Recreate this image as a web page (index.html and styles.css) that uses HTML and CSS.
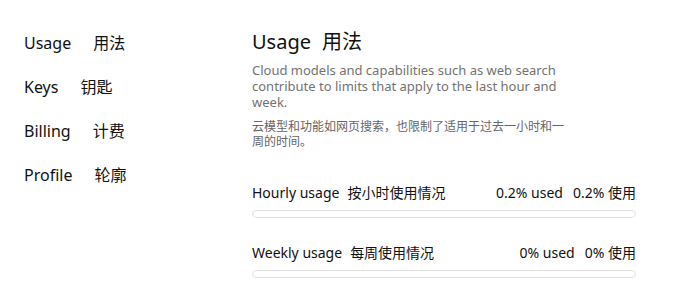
FILE: index.html
```html
<!DOCTYPE html>
<html lang="en">
<head>
<meta charset="utf-8">
<title>Usage</title>
<link rel="stylesheet" href="styles.css">
</head>
<body>
<div class="page">
  <nav class="sidebar">
    <a class="nav-item" href="#"><span>Usage</span><span class="zh">用法</span></a>
    <a class="nav-item" href="#"><span>Keys</span><span class="zh">钥匙</span></a>
    <a class="nav-item" href="#"><span>Billing</span><span class="zh">计费</span></a>
    <a class="nav-item" href="#"><span>Profile</span><span class="zh">轮廓</span></a>
  </nav>
  <main class="main">
    <h1 class="title"><span>Usage</span><span class="zh">用法</span></h1>
    <p class="desc">Cloud models and capabilities such as web search contribute to limits that apply to the last hour and week.</p>
    <p class="desc-zh">云模型和功能如网页搜索，也限制了适用于过去一小时和一周的时间。</p>
    <section class="meter">
      <div class="meter-head">
        <div class="meter-label"><span>Hourly usage</span><span class="zh">按小时使用情况</span></div>
        <div class="meter-value"><span>0.2% used</span><span class="zh">0.2% 使用</span></div>
      </div>
      <div class="bar"><div class="fill" style="width:0.2%"></div></div>
    </section>
    <section class="meter">
      <div class="meter-head">
        <div class="meter-label"><span>Weekly usage</span><span class="zh">每周使用情况</span></div>
        <div class="meter-value"><span>0% used</span><span class="zh">0% 使用</span></div>
      </div>
      <div class="bar"><div class="fill" style="width:0%"></div></div>
    </section>
  </main>
</div>
</body>
</html>
```
FILE: styles.css
```css
html, body {
  margin: 0;
  padding: 0;
  background: #fff;
}
body {
  font-family: "Noto Sans", "Noto Sans CJK SC", sans-serif;
  color: #111;
}
.page {
  display: flex;
  padding: 24px 24px 0 24px;
}
.sidebar {
  width: 228px;
  display: flex;
  flex-direction: column;
}
.nav-item {
  display: flex;
  gap: 22px;
  font-size: 16px;
  line-height: 24px;
  padding: 7px 0 13px;
  color: #111;
  text-decoration: none;
}
.main {
  width: 384px;
  display: flex;
  flex-direction: column;
}
.title {
  margin: 0;
  font-size: 20px;
  font-weight: 400;
  line-height: 28px;
  padding-top: 4px;
  display: flex;
  gap: 11px;
}
.desc {
  margin: 6px 0 0;
  max-width: 320px;
  font-size: 13px;
  line-height: 16px;
  color: #737373;
}
.desc-zh {
  margin: 9px 0 0;
  max-width: 320px;
  font-size: 12px;
  line-height: 15px;
  color: #666;
}
.meter {
  margin-top: 34px;
  display: flex;
  flex-direction: column;
}
.meter + .meter {
  margin-top: 25px;
}
.meter-head {
  display: flex;
  justify-content: space-between;
  align-items: center;
  font-size: 14px;
  line-height: 20px;
  color: #111;
}
.meter-label, .meter-value {
  display: flex;
  gap: 8px;
}
.meter-value {
  gap: 10px;
}
.bar {
  margin-top: 7px;
  height: 8px;
  border: 1px solid #e2e2e2;
  border-radius: 5px;
  box-sizing: border-box;
  overflow: hidden;
}
.fill {
  height: 100%;
  background: #ececec;
}
```
